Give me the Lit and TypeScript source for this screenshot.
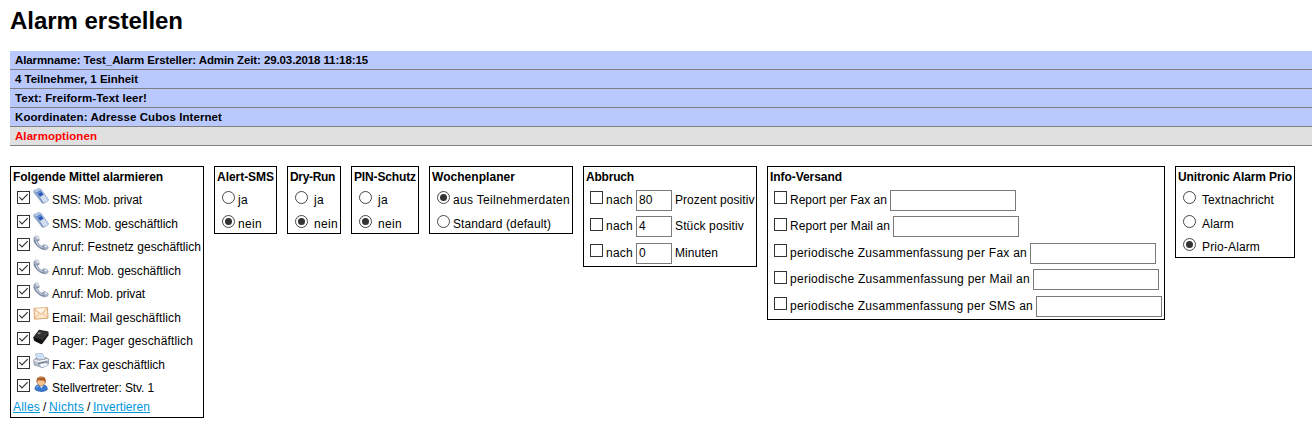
import { LitElement, html, svg, css, nothing } from "lit";
import { customElement, property } from "lit/decorators.js";

const icons: Record<string, unknown> = {
  mobile: svg`<path d="M.8 2.6 6 .3 8 1.2 15.4 11.2 15 13 10.6 15.7 9.2 15.2.8 4.6z" fill="#b9cbe5" stroke="#9aaed0" stroke-width=".7"/>
    <path d="M1 3.7 2.1 3.3 10.9 14.5 10.3 15.3 9.3 15z" fill="#7b94bd"/>
    <path d="M3.7 4.2 7.4 2.2 10.6 6.6 7.1 8.8z" fill="#2c57b4"/><path d="M4.4 4.3 7.2 2.8 8.2 4.2 5.6 5.8z" fill="#6b97e6"/>
    <path d="M7.7 9.6 11.2 7.5 14.7 12.2 11 14.5z" fill="#e8f0fa"/><path d="M8.9 10.4 11.8 8.6M10 11.8 12.9 10M11 13.1 13.9 11.3" stroke="#9aaecb" stroke-width=".6"/>`,
  phone: svg`<path d="M1.3 2.1C2.5.6 4.7.7 5.3 1.8L6.3 4.6C6.3 5.9 4.9 6.2 4.6 6.6 4.9 8.5 7.2 11 9.2 11.3 9.9 10.4 10.4 9.2 11.8 9.6L14.8 11.2C15.9 12.1 15 14.4 12.9 14.8 8 15.7.2 9 .7 4z" fill="#a4afc3" stroke="#8b96ad" stroke-width=".6"/>
    <path d="M2.6 2.3C3.4 1.5 4.2 1.8 4.5 2.6L5.2 4.3" fill="none" stroke="#eef1f7" stroke-width="1.3"/>
    <path d="M11.3 10.6 14 12" fill="none" stroke="#eef1f7" stroke-width="1.3"/>
    <path d="M3.3 6.5C3.6 9 6.2 11.8 9 12.6" fill="none" stroke="#dfe5ef" stroke-width="1"/>
    <path d="M1.5 5C1.9 9 7 13.7 11.6 14.1" fill="none" stroke="#6d7a95" stroke-width=".9"/>
    <path d="M3.6 5.8 5.8 4.9M9.6 12 11 10.2" stroke="#66728c" stroke-width=".7"/>`,
  mail: svg`<path d="M1 2.4 14.5 1.7 15 12.2 1.5 13.2z" fill="#fde8cb" stroke="#dba36f" stroke-width="1"/>
    <path d="M1.5 12.8 6.2 7.5M14.6 11.9 9.8 7.2" stroke="#dfae7f" stroke-width=".9"/><path d="M1.4 2.8 8 8.5 14.2 2.2" fill="#fff6e8" stroke="#d79863" stroke-width=".9"/>`,
  pager: svg`<path d="M6 .8 15.3 2.5 15.7 6 9.4 14.8 8 15.2 1 11.8.3 8.2z" fill="#161616"/>
    <path d="M6.3 1.4 14.8 3.1 9 10.6.9 8.1z" fill="#333"/><path d="M5.6 3.2 8.2 3.7 6.9 5.3 4.4 4.7z" fill="#8d9090"/>
    <path d="M9 10.9 15.2 3.5" fill="none" stroke="#666" stroke-width=".6"/><path d="M2.4 10.1 6.7 11.8v1.5L2.6 11.5z" fill="#080808"/>`,
  fax: svg`<path d="M2.5.8 9.5.4 12.3 7 4.3 8z" fill="#e6f2ff" stroke="#8da8ca" stroke-width=".7"/>
    <path d="M4 2.5 9 2M4.5 4 9.7 3.5M5 5.5 10.3 5" stroke="#acc9ed" stroke-width=".7"/>
    <path d="M.7 6.8 4 4.8 5 7 12 6.2 12.5 4.4 15.6 6 15.5 10.9 9.4 14.7 1.2 11.9z" fill="#b8bfcb" stroke="#7f8796" stroke-width=".7"/>
    <path d="M1.3 7 5.1 8.6 14.8 6.6" fill="none" stroke="#f4f6fa" stroke-width="1.2"/><path d="M5 10 14 8.2 14.4 10.2 6 12z" fill="#606a7b"/>
    <path d="M6 11 13.2 9.6 15.5 12.3 8.5 14.8z" fill="#f6faff" stroke="#91a5c2" stroke-width=".6"/>`,
  person: svg`<path d="M2 13.5C1.8 10.4 3.9 8.7 6 8.5L10.7 8.8C13.3 9.3 14.6 11.4 14.2 13.7 11 16.1 5 16 2 13.5z" fill="#3979d2" stroke="#2458a5" stroke-width=".7"/>
    <path d="M6 8.8 8.5 12.2 10.5 9z" fill="#eef5ff"/><path d="M3.5 12C4 10.5 4.8 10 5.8 9.8" fill="none" stroke="#8cbcf3"/>
    <circle cx="8.2" cy="5.6" r="4.2" fill="#f3c393" stroke="#a96531" stroke-width=".6"/>
    <path d="M3.8 6.5C2.8 2.5 5 .3 8.3.4 12.2.4 13.5 3.3 12.4 7 11.8 5.8 11.3 4.9 10.8 4.4 8.6 4.9 6.4 4.4 5.2 3.9 4.7 4.5 4.3 5.4 3.8 6.5z" fill="#a85d29"/>
    <path d="M5.5 2.5C6.6 1.3 8.5 1.2 9.7 1.8" fill="none" stroke="#d89658"/>`,
};

/** A single line of text spaced to an exact advance width. */
@customElement("sized-text")
export class SizedText extends LitElement {
  static styles = css`
    :host { display: block; white-space: pre; flex: none; }
    .text { display: inline-block; text-decoration: inherit; }
  `;
  @property() text = "";
  @property({ type: Number }) size = 0;

  render() {
    return html`<span class="text">${this.text}</span>`;
  }
  firstUpdated() {
    const span = this.renderRoot.querySelector<HTMLElement>(".text")!;
    const natural = span.getBoundingClientRect().width;
    span.style.letterSpacing = `${(this.size - natural) / this.text.length}px`;
    this.style.width = `${this.size}px`;
  }
}

interface Row {
  label: string;
  size: number;
  on?: boolean;
  icon?: string;
  value?: string;
  after?: string;
  afterSize?: number;
}
interface Panel {
  kind: string;
  title: string;
  titleSize: number;
  type: "check" | "radio";
  rows: Row[];
}

const yesNo: Row[] = [
  { label: "ja", size: 10 },
  { label: "nein", size: 24, on: true },
];

const panels: Panel[] = [
  {
    kind: "means", title: "Folgende Mittel alarmieren", titleSize: 150, type: "check",
    rows: [
      { icon: "mobile", label: "SMS: Mob. privat", size: 90, on: true },
      { icon: "mobile", label: "SMS: Mob. geschäftlich", size: 126, on: true },
      { icon: "phone", label: "Anruf: Festnetz geschäftlich", size: 149, on: true },
      { icon: "phone", label: "Anruf: Mob. geschäftlich", size: 129, on: true },
      { icon: "phone", label: "Anruf: Mob. privat", size: 93, on: true },
      { icon: "mail", label: "Email: Mail geschäftlich", size: 129, on: true },
      { icon: "pager", label: "Pager: Pager geschäftlich", size: 141, on: true },
      { icon: "fax", label: "Fax: Fax geschäftlich", size: 113, on: true },
      { icon: "person", label: "Stellvertreter: Stv. 1", size: 102, on: true },
    ],
  },
  { kind: "alert", title: "Alert-SMS", titleSize: 57, type: "radio", rows: yesNo },
  { kind: "dry", title: "Dry-Run", titleSize: 45, type: "radio", rows: yesNo },
  { kind: "pin", title: "PIN-Schutz", titleSize: 62, type: "radio", rows: yesNo },
  {
    kind: "week", title: "Wochenplaner", titleSize: 83, type: "radio",
    rows: [
      { label: "aus Teilnehmerdaten", size: 117, on: true },
      { label: "Standard (default)", size: 98 },
    ],
  },
  {
    kind: "stop", title: "Abbruch", titleSize: 48, type: "check",
    rows: [
      { label: "nach", size: 27, value: "80", after: "Prozent positiv", afterSize: 79.5 },
      { label: "nach", size: 27, value: "4", after: "Stück positiv", afterSize: 69 },
      { label: "nach", size: 27, value: "0", after: "Minuten", afterSize: 43 },
    ],
  },
  {
    kind: "info", title: "Info-Versand", titleSize: 72, type: "check",
    rows: [
      { label: "Report per Fax an", size: 97, value: "" },
      { label: "Report per Mail an", size: 100, value: "" },
      { label: "periodische Zusammenfassung per Fax an", size: 237, value: "" },
      { label: "periodische Zusammenfassung per Mail an", size: 240, value: "" },
      { label: "periodische Zusammenfassung per SMS an", size: 243, value: "" },
    ],
  },
  {
    kind: "prio", title: "Unitronic Alarm Prio", titleSize: 114, type: "radio",
    rows: [
      { label: "Textnachricht", size: 72 },
      { label: "Alarm", size: 32 },
      { label: "Prio-Alarm", size: 58, on: true },
    ],
  },
];

const bars = [
  { text: "Alarmname: Test_Alarm Ersteller: Admin Zeit: 29.03.2018 11:18:15", size: 353 },
  { text: "4 Teilnehmer, 1 Einheit", size: 123 },
  { text: "Text: Freiform-Text leer!", size: 132 },
  { text: "Koordinaten: Adresse Cubos Internet", size: 207 },
  { text: "Alarmoptionen", size: 82, active: true },
];

@customElement("app-root")
export class AppRoot extends LitElement {
  static styles = css`
    :host {
      display: block; height: 423px; overflow: hidden; box-sizing: border-box;
      padding-left: 10px; background: #fff; color: #000;
      font: 12px/14px "Liberation Sans", Arial, sans-serif;
    }
    h1 { margin: 0; padding-top: 7px; height: 51px; box-sizing: border-box; font-size: 24px; line-height: 28px; }
    .bar {
      height: 19px; box-sizing: border-box; padding-left: 5px; border-bottom: 1px solid #808080;
      background: #b9c9fe; font-size: 11.5px; font-weight: bold; line-height: 18px;
    }
    .bar.active { background: #e0e0e0; color: #f00; }
    .panels { display: flex; align-items: flex-start; margin-top: 20px; }
    .panel { flex: none; box-sizing: border-box; border: 1px solid #000; padding: 3px 0 0 2px; --pitch: 23.5px; }
    .title { font-weight: bold; height: 17px; }
    .row { display: flex; height: var(--pitch); padding-left: 5px; align-items: flex-start; }
    .control { flex: none; display: block; width: 13px; height: 13px; margin-top: 4px; }
    .icon { flex: none; display: block; width: 16px; height: 16px; margin: 1px 3px 0 3px; }
    .label { margin-top: 5.9px; margin-left: 3px; }
    .means .label { margin-left: 0; }
    .field {
      flex: none; box-sizing: border-box; width: 126px; height: 21px; margin: 2.9px 0 0 3px;
      border: 1px solid #7a7a7a; padding: 2px; background: #fff;
    }
    .after { margin: 5.9px 0 0 3px; }
    .means { width: 194px; height: 252px; margin-right: 10px; padding-left: 2px; }
    .means .row { padding-left: 4px; }
    .alert { width: 63px; height: 68px; margin-right: 10px; }
    .dry { width: 54px; height: 68px; margin-right: 10px; }
    .pin { width: 68px; height: 68px; margin-right: 10px; }
    .pin .label, .dry .label, .prio .label { margin-left: 6px; }
    .means .label, .alert .label, .dry .label, .pin .label, .week .label, .prio .label { margin-top: 6px; }
    .week { width: 144px; height: 68px; margin-right: 10px; }
    .stop { width: 174px; height: 101px; margin-right: 10px; --pitch: 26.5px; }
    .stop .row, .info .row { padding-left: 4px; }
    .stop .field { width: 36px; }
    .info { width: 398px; height: 154px; margin-right: 10px; --pitch: 26.5px; }
    .prio { width: 120px; height: 92px; }
    .links { display: flex; height: 14px; padding-top: 1px; }
    .link { color: #0096dc; text-decoration: underline; }
  `;

  private control(type: string, on?: boolean) {
    return type === "radio"
      ? html`<svg class="control" viewBox="0 0 13 13" role="radio" aria-checked=${on ? "true" : "false"}>
          <circle cx="6.5" cy="6.5" r="6" fill="#fff" stroke="#333" stroke-width=".9" />
          ${on ? svg`<circle cx="6.5" cy="6.5" r="3.5" fill="#333"/>` : nothing}
        </svg>`
      : html`<svg class="control" viewBox="0 0 13 13" role="checkbox" aria-checked=${on ? "true" : "false"}>
          <rect x=".5" y=".5" width="12" height="12" fill="#fff" stroke="#333" />
          ${on ? svg`<path d="M2.3 6.2 5 8.9 10.7 3.2" fill="none" stroke="#333" stroke-width="1.2"/>` : nothing}
        </svg>`;
  }

  private row(p: Panel, r: Row) {
    return html`<div class="row">
      ${this.control(p.type, r.on)}
      ${r.icon ? html`<svg class="icon" viewBox="0 0 16 16">${icons[r.icon]}</svg>` : nothing}
      <sized-text class="label" .text=${r.label} .size=${r.size}></sized-text>
      ${r.value !== undefined ? html`<div class="field">${r.value}</div>` : nothing}
      ${r.after ? html`<sized-text class="after" .text=${r.after} .size=${r.afterSize ?? 0}></sized-text>` : nothing}
    </div>`;
  }

  render() {
    return html`
      <h1><sized-text .text=${"Alarm erstellen"} .size=${173}></sized-text></h1>
      ${bars.map((b) => html`<div class="bar ${b.active ? "active" : ""}"><sized-text .text=${b.text} .size=${b.size}></sized-text></div>`)}
      <div class="panels">
        ${panels.map((p) => html`<section class="panel ${p.kind}">
          <sized-text class="title" .text=${p.title} .size=${p.titleSize}></sized-text>
          ${p.rows.map((r) => this.row(p, r))}
          ${p.kind === "means"
            ? html`<div class="links">
                <sized-text class="link" .text=${"Alles"} .size=${27}></sized-text>
                <sized-text .text=${" / "} .size=${9}></sized-text>
                <sized-text class="link" .text=${"Nichts"} .size=${35}></sized-text>
                <sized-text .text=${" / "} .size=${9}></sized-text>
                <sized-text class="link" .text=${"Invertieren"} .size=${57}></sized-text>
              </div>`
            : nothing}
        </section>`)}
      </div>`;
  }
}
